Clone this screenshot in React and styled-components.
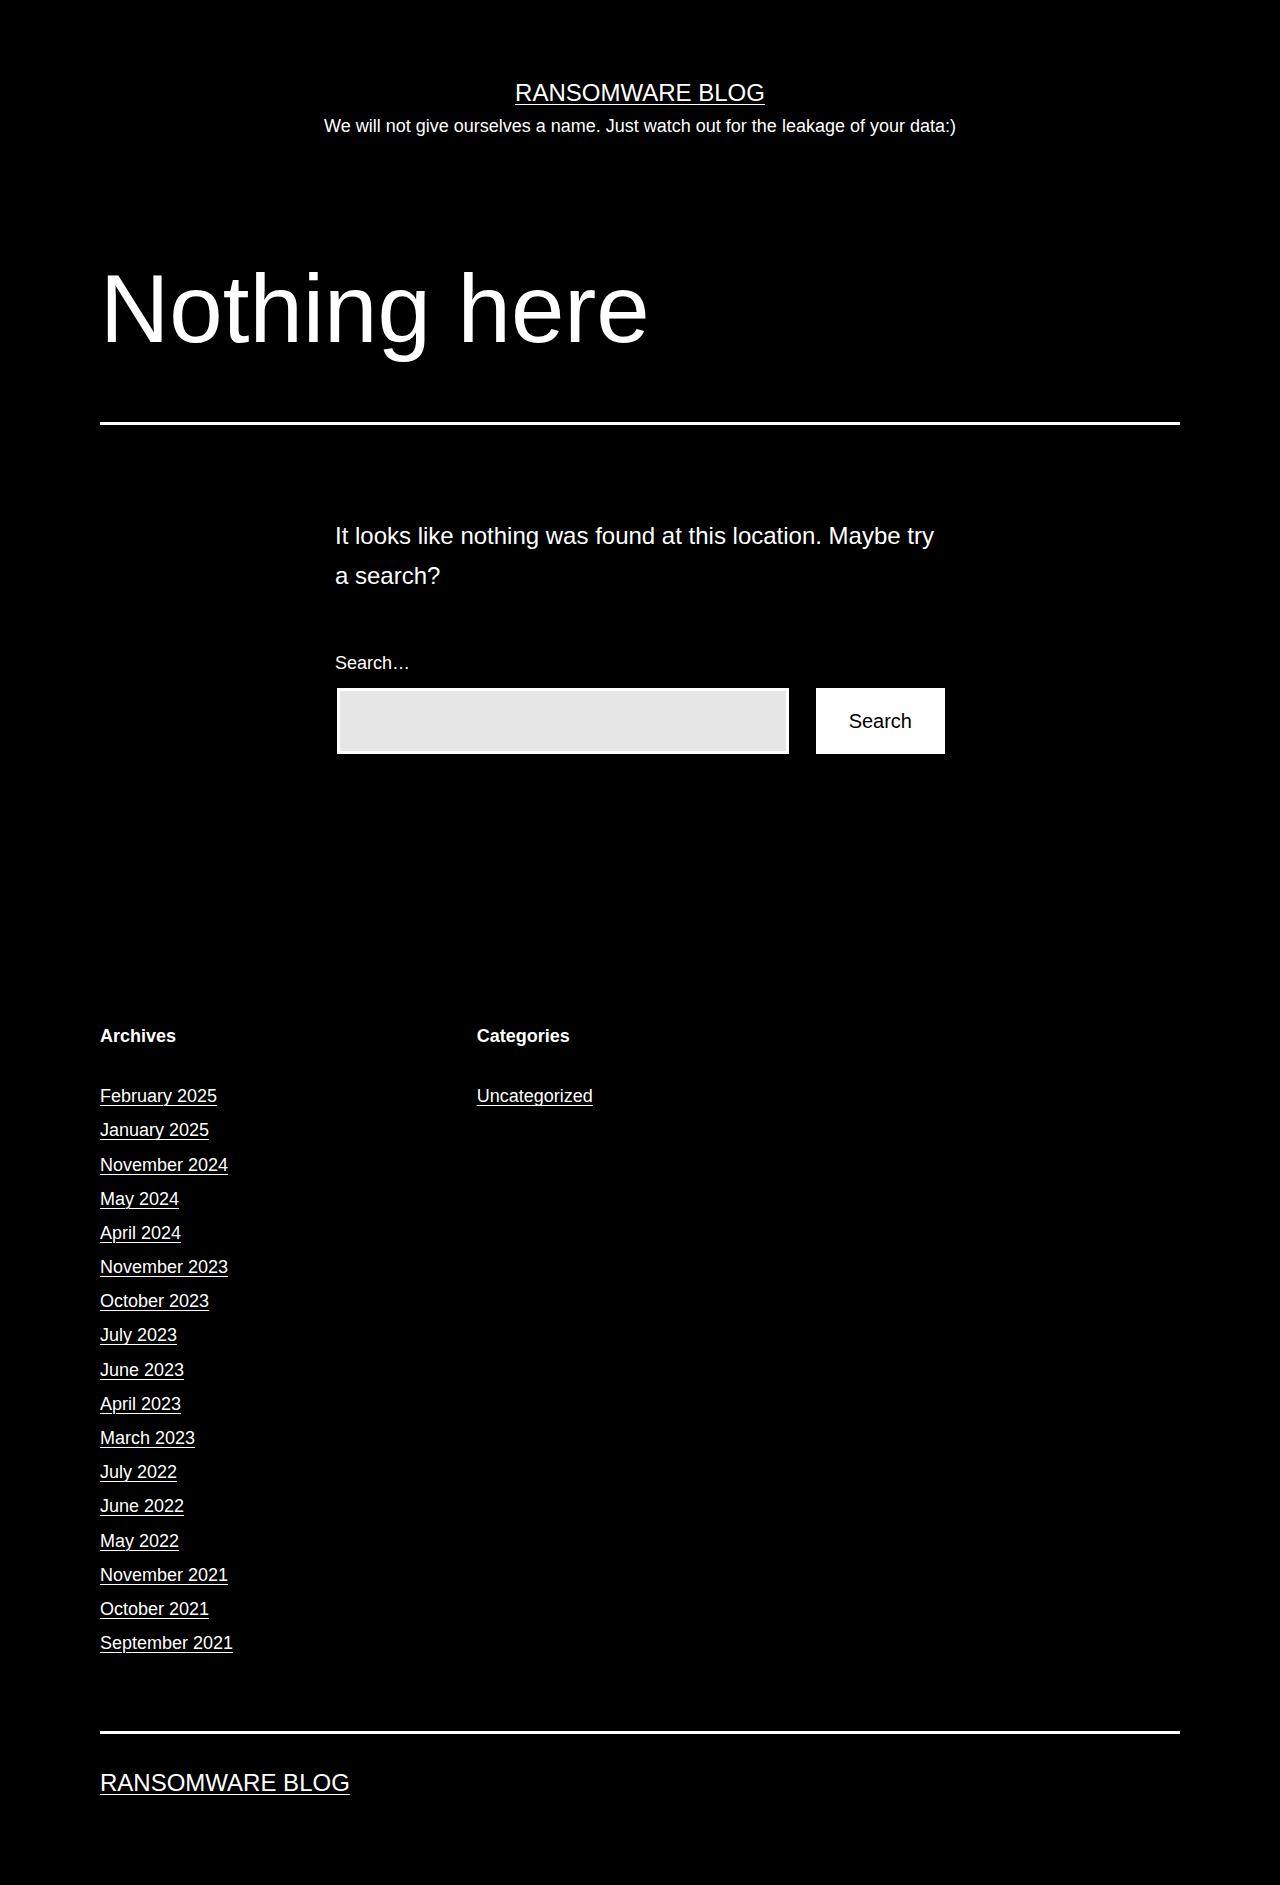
import React from 'react';
import styled, { createGlobalStyle } from 'styled-components';

const archives = [
  'February 2025',
  'January 2025',
  'November 2024',
  'May 2024',
  'April 2024',
  'November 2023',
  'October 2023',
  'July 2023',
  'June 2023',
  'April 2023',
  'March 2023',
  'July 2022',
  'June 2022',
  'May 2022',
  'November 2021',
  'October 2021',
  'September 2021',
];

const App = () => {
  return (
    <Page>
      <GlobalStyle />
      <SiteHeader>
        <SiteTitle href="#">RANSOMWARE BLOG</SiteTitle>
        <Tagline>We will not give ourselves a name. Just watch out for the leakage of your data:)</Tagline>
      </SiteHeader>

      <Main>
        <PageHeader>
          <PageTitle>Nothing here</PageTitle>
        </PageHeader>

        <Content>
          <Intro>It looks like nothing was found at this location. Maybe try a search?</Intro>
          <SearchForm onSubmit={(e) => e.preventDefault()}>
            <Label htmlFor="search-field">Search…</Label>
            <SearchRow>
              <SearchField id="search-field" type="search" />
              <SearchButton type="submit">Search</SearchButton>
            </SearchRow>
          </SearchForm>
        </Content>

        <Widgets>
          <Widget>
            <WidgetTitle>Archives</WidgetTitle>
            <WidgetList>
              {archives.map((item) => (
                <li key={item}>
                  <TextLink href="#">{item}</TextLink>
                </li>
              ))}
            </WidgetList>
          </Widget>
          <Widget>
            <WidgetTitle>Categories</WidgetTitle>
            <WidgetList>
              <li>
                <TextLink href="#">Uncategorized</TextLink>
              </li>
            </WidgetList>
          </Widget>
        </Widgets>
      </Main>

      <SiteFooter>
        <FooterTitle href="#">RANSOMWARE BLOG</FooterTitle>
      </SiteFooter>
    </Page>
  );
};

export default App;

const GlobalStyle = createGlobalStyle`
  html, body {
    margin: 0;
    padding: 0;
    background: #000;
  }
  body {
    font-family: "Liberation Sans", Arial, sans-serif;
    color: #fff;
  }
  * {
    box-sizing: border-box;
  }
`;

const Page = styled.div`
  min-height: 1885px;
  background: #000;
  color: #fff;
`;

const TextLink = styled.a`
  color: #fff;
  text-decoration: underline;
  text-decoration-thickness: 1px;
  text-underline-offset: 3px;
`;

const SiteHeader = styled.header`
  padding-top: 77px;
  text-align: center;
`;

const SiteTitle = styled(TextLink)`
  display: inline-block;
  font-size: 24px;
  line-height: 31px;
`;

const Tagline = styled.p`
  margin: 6px 0 0;
  font-size: 18px;
  line-height: 25px;
`;

const Main = styled.main`
  width: 1080px;
  margin: 0 auto;
`;

const PageHeader = styled.div`
  padding-top: 117px;
  padding-bottom: 60px;
  border-bottom: 3px solid #fff;
`;

const PageTitle = styled.h1`
  margin: 0;
  font-size: 96px;
  font-weight: 400;
  line-height: 1.1;
`;

const Content = styled.div`
  width: 610px;
  margin: 91px auto 0;
`;

const Intro = styled.p`
  margin: 0 0 51px;
  font-size: 24px;
  line-height: 1.7;
`;

const SearchForm = styled.form`
  display: flex;
  flex-direction: column;
`;

const Label = styled.label`
  display: block;
  margin-bottom: 9px;
  font-size: 18px;
  line-height: 1.7;
`;

const SearchRow = styled.div`
  display: flex;
  align-items: stretch;
`;

const SearchField = styled.input`
  flex: 1;
  height: 66px;
  margin: 0 27px 0 2px;
  border: 3px solid #fff;
  background: #e6e6e6;
  font-family: inherit;
  font-size: 18px;
  outline: none;
`;

const SearchButton = styled.button`
  padding: 15px 30px;
  border: 3px solid #fff;
  background: #fff;
  color: #000;
  font-family: inherit;
  font-size: 20px;
  line-height: 1.5;
  cursor: pointer;
`;

const Widgets = styled.aside`
  display: grid;
  grid-template-columns: repeat(3, 1fr);
  column-gap: 50px;
  margin-top: 271px;
`;

const Widget = styled.section``;

const WidgetTitle = styled.h2`
  margin: 0 0 31px;
  font-size: 18px;
  font-weight: 700;
  line-height: 1.3;
`;

const WidgetList = styled.ul`
  margin: 0;
  padding: 0;
  list-style: none;

  li {
    font-size: 18px;
    line-height: 1.9;
  }
`;

const SiteFooter = styled.footer`
  width: 1080px;
  margin: 71px auto 0;
  padding: 33px 0 87px;
  border-top: 3px solid #fff;
`;

const FooterTitle = styled(TextLink)`
  font-size: 24px;
  line-height: 31px;
`;
